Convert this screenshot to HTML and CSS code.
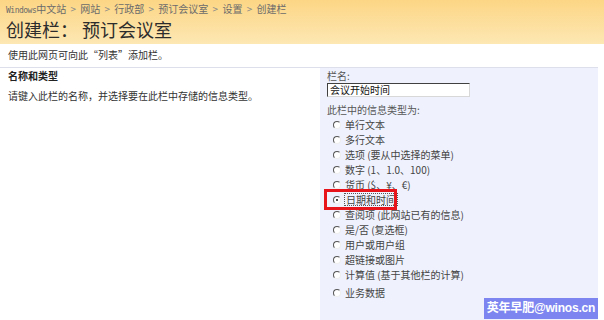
FILE: index.html
```html
<!DOCTYPE html>
<html lang="zh-CN">
<head>
    <meta charset="UTF-8">
    <title>创建栏</title>
    <link rel="stylesheet" href="styles.css">
</head>
<body>
    <div class="header">
        <div class="crumbs">
            <span class="mono">Windows</span>中文站 <span class="sep">&gt;</span> 网站 <span class="sep">&gt;</span> 行政部 <span class="sep">&gt;</span> 预订会议室 <span class="sep">&gt;</span> 设置 <span class="sep">&gt;</span> 创建栏
        </div>
        <h1>创建栏： 预订会议室</h1>
    </div>
    <p class="intro">使用此网页可向此“列表”添加栏。</p>
    <div class="section">
        <div class="desc">
            <h3>名称和类型</h3>
            <p>请键入此栏的名称，并选择要在此栏中存储的信息类型。</p>
        </div>
        <div class="panel">
            <label class="field-label">栏名:</label>
            <div class="input">会议开始时间</div>
            <div class="type-label">此栏中的信息类型为:</div>
            <ul class="types">
                <li><span class="radio"></span>单行文本</li>
                <li><span class="radio"></span>多行文本</li>
                <li><span class="radio"></span>选项 (要从中选择的菜单)</li>
                <li><span class="radio"></span>数字 (1、1.0、100)</li>
                <li><span class="radio"></span>货币 ($、¥、€)</li>
                <li class="picked"><span class="radio on"></span><span class="focus">日期和时间</span></li>
                <li><span class="radio"></span>查阅项 (此网站已有的信息)</li>
                <li><span class="radio"></span>是/否 (复选框)</li>
                <li><span class="radio"></span>用户或用户组</li>
                <li><span class="radio"></span>超链接或图片</li>
                <li><span class="radio"></span>计算值 (基于其他栏的计算)</li>
                <li class="last"><span class="radio"></span>业务数据</li>
            </ul>
            <div class="mark">英年早肥@winos.cn</div>
        </div>
    </div>
</body>
</html>
```
FILE: styles.css
```css
body {
    margin: 0;
    font-family: "Noto Sans CJK SC", sans-serif;
    font-size: 10px;
    color: #333;
    background: #fff;
    width: 604px;
    height: 320px;
    overflow: hidden;
}

.header {
    height: 44px;
    padding: 3px 0 0 6px;
    box-sizing: border-box;
    background: linear-gradient(#fcd685, #fde7b3);
}

.crumbs {
    font-size: 10px;
    line-height: 11px;
    color: #6b6b6b;
}

.sep {
    margin: 0 2px;
    color: #888;
}

.mono {
    font-family: "DejaVu Sans Mono", monospace;
    font-size: 8px;
    letter-spacing: -0.5px;
}

h1 {
    margin: 1px 0 0 0;
    font-size: 18px;
    line-height: 24px;
    font-weight: normal;
    color: #2c2c2c;
}

.intro {
    margin: 0;
    padding: 5px 0 0 8px;
    height: 23px;
    box-sizing: border-box;
    line-height: 11px;
}

.section {
    display: flex;
    border-top: 1px solid #dde0ea;
    margin-right: 6px;
    height: 253px;
}

.desc {
    width: 320px;
    padding: 2px 0 0 8px;
    box-sizing: border-box;
}

.desc h3 {
    margin: 0;
    font-size: 10px;
    line-height: 12px;
    font-weight: bold;
    color: #222;
}

.desc p {
    margin: 8px 0 0 0;
    line-height: 12px;
}

.panel {
    flex: 1;
    position: relative;
    background: #eff2fd;
    padding: 2px 0 0 7px;
}

.field-label {
    display: block;
    line-height: 11px;
    color: #555;
}

.input {
    width: 139px;
    height: 12px;
    margin-top: 2px;
    padding-left: 2px;
    line-height: 12px;
    background: #fff;
    border-top: 1px solid #404040;
    border-left: 1px solid #404040;
    border-right: 1px solid #d8d8d8;
    border-bottom: 1px solid #d8d8d8;
    color: #111;
}

.type-label {
    margin-top: 7px;
    line-height: 11px;
    color: #555;
}

.types {
    list-style: none;
    margin: 2px 0 0 0;
    padding: 0 0 0 6px;
}

.types li {
    display: flex;
    align-items: center;
    height: 15px;
    color: #444;
}

.types li.last {
    margin-top: 3px;
}

.radio {
    width: 6px;
    height: 6px;
    margin-right: 4px;
    border-radius: 50%;
    border: 1px solid;
    border-color: #555 #eee #eee #555;
    background: #fff;
    position: relative;
}

.radio.on::after {
    content: "";
    position: absolute;
    left: 2px;
    top: 2px;
    width: 2px;
    height: 2px;
    border-radius: 50%;
    background: #111;
}

.focus {
    outline: 1px dotted #555;
    line-height: 11px;
    padding: 0 1px;
}

.picked {
    position: relative;
}

.picked::before {
    content: "";
    position: absolute;
    left: -9px;
    top: -3px;
    width: 67px;
    height: 15px;
    border: 3px solid #e8141b;
}

.mark {
    position: absolute;
    right: 0;
    bottom: 2px;
    width: 114px;
    height: 21px;
    background: #7c85f0;
    color: #fff;
    font-family: "Liberation Sans", "Noto Sans CJK SC", sans-serif;
    font-size: 12px;
    font-weight: bold;
    letter-spacing: -0.2px;
    line-height: 21px;
    text-align: center;
    white-space: nowrap;
}
```
